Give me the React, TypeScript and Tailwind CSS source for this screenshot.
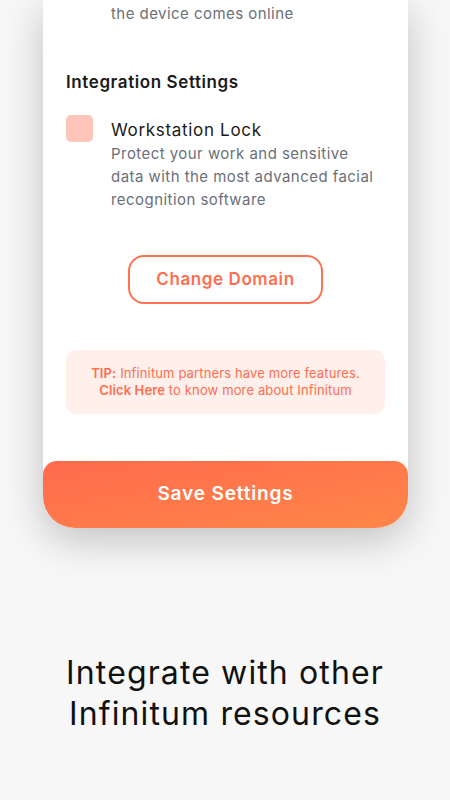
import React from "react";

export default function App() {
  return (
    <div className="min-h-[800px] w-[450px] bg-[#f7f7f7] overflow-hidden" style={{ fontFamily: "Inter, 'Noto Sans', sans-serif" }}>
      <div className="mx-[43px] w-[365px] bg-white rounded-b-[32px] shadow-[0_12px_40px_rgba(0,0,0,0.22)] flex flex-col">
        <div className="pl-[68px] pt-[2px] text-[15px] leading-[23px] tracking-[0.03em] text-[#6b6f78]">the device comes online</div>
        <div className="mt-[45px] px-[23px] text-[17px] leading-[24px] font-semibold tracking-[0.035em] text-[#1a1a1a]">Integration Settings</div>
        <div className="mt-[24px] px-[23px] flex gap-[18px]">
          <div className="w-[27px] h-[27px] rounded-[5px] bg-[#ffc5b9] shrink-0 mt-[-3px]" />
          <div className="flex flex-col">
            <div className="text-[17px] leading-[24px] tracking-[0.04em] text-[#1a1a1a]">Workstation Lock</div>
            <div className="text-[15px] leading-[23px] tracking-[0.03em] text-[#6b6f78] pr-[8px]">Protect your work and sensitive data with the most advanced facial recognition software</div>
          </div>
        </div>
        <div className="mt-[44px] flex justify-center">
          <div className="w-[195px] h-[49px] border-2 border-[#ff7150] rounded-[16px] flex items-center justify-center text-[17px] font-semibold tracking-[0.035em] text-[#ff6e4f]">Change Domain</div>
        </div>
        <div className="mt-[46px] mx-[23px] h-[64px] rounded-[10px] bg-[#fff0ec] flex flex-col items-center justify-center text-[13px] leading-[17px] tracking-[0.01em] text-[#ff6e4f]">
          <div><span className="font-semibold">TIP:</span> Infinitum partners have more features.</div>
          <div><span className="font-semibold">Click Here</span> to know more about Infinitum</div>
        </div>
        <div className="mt-[47px] h-[67px] rounded-t-[14px] rounded-b-[32px] bg-gradient-to-br from-[#ff6a4d] to-[#ff8648] flex items-center justify-center text-white text-[19px] font-semibold tracking-[0.045em]">Save Settings</div>
      </div>
      <div className="mt-[124px] text-center text-[32px] leading-[41px] tracking-[0.035em] text-[#111]">
        Integrate with other<br />Infinitum resources
      </div>
    </div>
  );
}
